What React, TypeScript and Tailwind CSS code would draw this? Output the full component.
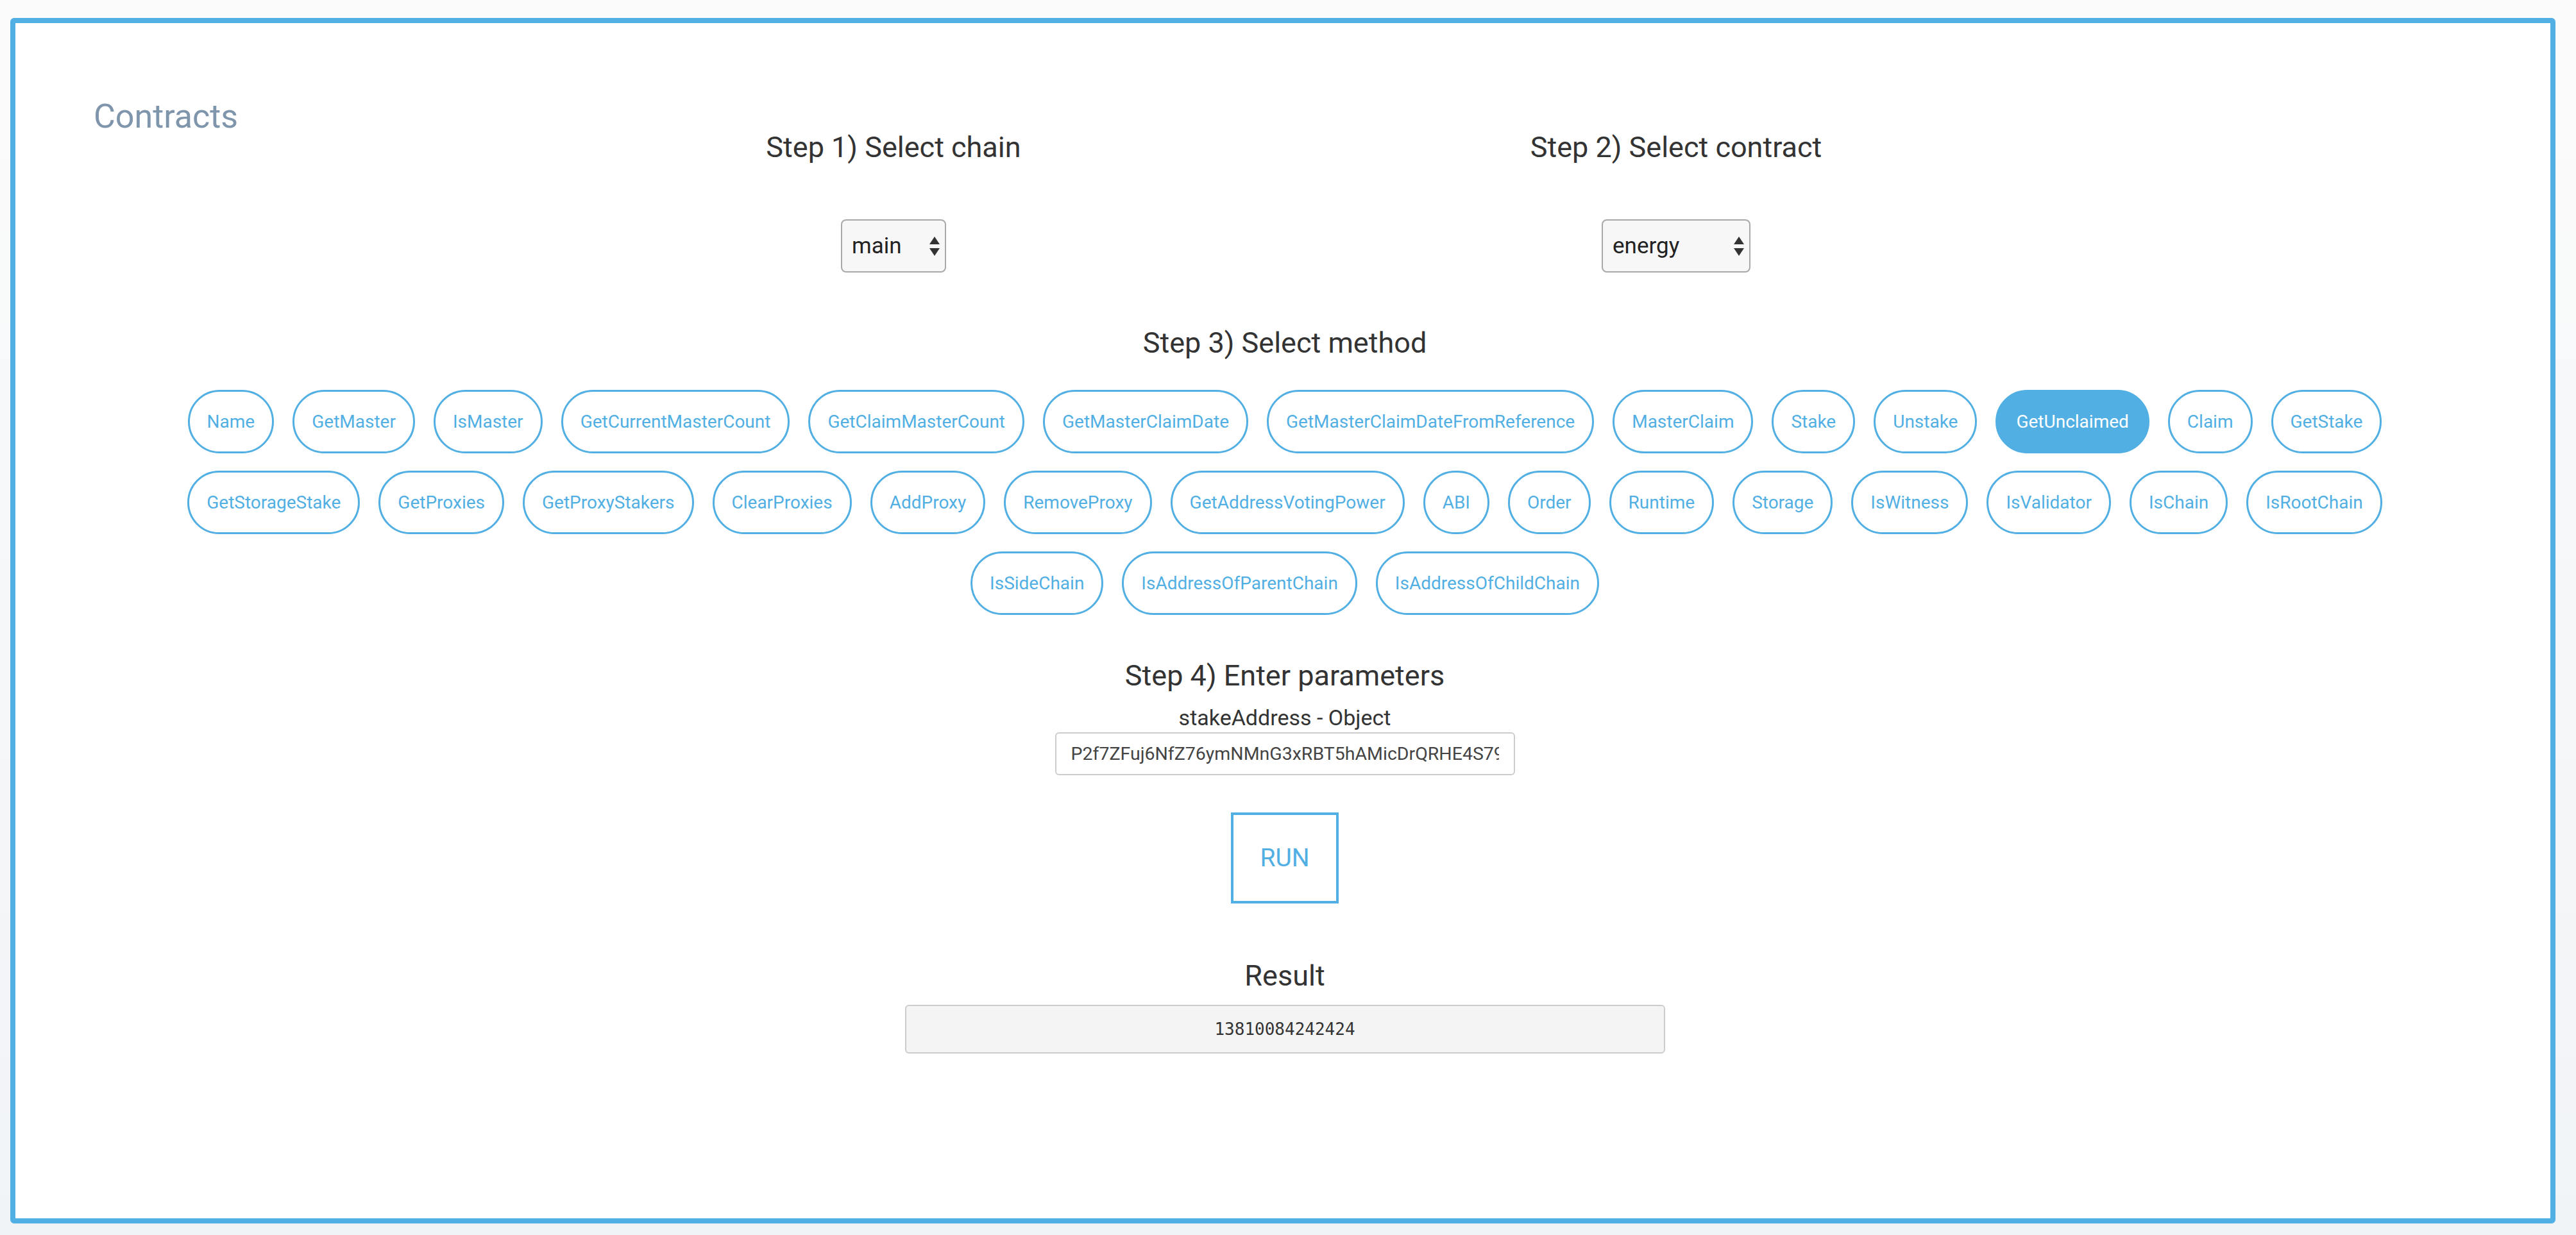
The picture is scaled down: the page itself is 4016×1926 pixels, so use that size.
import React from "react";

const rows: string[][] = [
  ["Name", "GetMaster", "IsMaster", "GetCurrentMasterCount", "GetClaimMasterCount", "GetMasterClaimDate", "GetMasterClaimDateFromReference", "MasterClaim", "Stake", "Unstake", "GetUnclaimed", "Claim", "GetStake"],
  ["GetStorageStake", "GetProxies", "GetProxyStakers", "ClearProxies", "AddProxy", "RemoveProxy", "GetAddressVotingPower", "ABI", "Order", "Runtime", "Storage", "IsWitness", "IsValidator", "IsChain", "IsRootChain"],
  ["IsSideChain", "IsAddressOfParentChain", "IsAddressOfChildChain"],
];

function Arrows() {
  return (
    <svg width="16" height="30" viewBox="0 0 16 30" className="shrink-0">
      <polygon points="8,0 16,12 0,12" fill="#333" />
      <polygon points="0,18 16,18 8,30" fill="#333" />
    </svg>
  );
}

function FakeSelect({ value, width }: { value: string; width: string }) {
  return (
    <div
      className={`${width} h-[83px] mt-[90px] flex items-center justify-between pl-[15px] pr-[8px] border-2 border-[#a9a9a9] rounded-[8px] bg-[#f7f7f7] text-[35px] leading-none text-[#222]`}
    >
      <span>{value}</span>
      <Arrows />
    </div>
  );
}

export default function App() {
  return (
    <div
      className="w-full h-[1926px] bg-gradient-to-b from-[#fbfbfb] to-[#f1f4f7] pt-[28px] pl-[16px] pr-[32px]"
      style={{ fontFamily: "Roboto, 'Noto Sans', sans-serif" }}
    >
      <div className="h-[1880px] border-[8px] border-[#51afe3] rounded-[6px] bg-white flex flex-col">
        <div className="mt-[120px] ml-[122px] text-[52px] leading-none text-[#7f95ab]">Contracts</div>

        <div className="flex justify-center pl-[6px] -mt-[1px]">
          <div className="w-[1220px] flex flex-col items-center">
            <div className="text-[45px] leading-none text-[#333]">Step 1) Select chain</div>
            <FakeSelect value="main" width="w-[164px]" />
          </div>
          <div className="w-[1220px] flex flex-col items-center">
            <div className="text-[45px] leading-none text-[#333]">Step 2) Select contract</div>
            <FakeSelect value="energy" width="w-[232px]" />
          </div>
        </div>

        <div className="flex flex-col items-center pl-[6px]">
          <div className="mt-[87px] text-[45px] leading-none text-[#333]">Step 3) Select method</div>

          <div className="mt-[51px] flex flex-col gap-[27px]">
            {rows.map((row, i) => (
              <div key={i} className="flex justify-center gap-[29px]">
                {row.map((m) => {
                  const active = m === "GetUnclaimed";
                  return (
                    <div
                      key={m}
                      className={
                        active
                          ? "h-[99px] px-[29px] flex items-center rounded-full bg-[#51afe3] border-[3px] border-[#51afe3] text-white text-[28px] leading-none"
                          : "h-[99px] px-[27px] flex items-center rounded-full border-[3px] border-[#51afe3] text-[#51afe3] text-[28px] leading-none"
                      }
                    >
                      {m}
                    </div>
                  );
                })}
              </div>
            ))}
          </div>

          <div className="mt-[72px] text-[45px] leading-none text-[#333]">Step 4) Enter parameters</div>
          <div className="mt-[26px] text-[34px] leading-none text-[#333]">stakeAddress - Object</div>
          <input
            readOnly
            value="P2f7ZFuj6NfZ76ymNMnG3xRBT5hAMicDrQRHE4S79TgJ4vXk"
            className="mt-[6px] w-[717px] h-[67px] border-2 border-[#cccccc] rounded-[6px] pl-[23px] pr-[23px] text-[28.5px] text-[#444] bg-white outline-none"
            style={{ fontFamily: "Roboto, sans-serif" }}
          />

          <div className="mt-[58px] w-[168px] h-[142px] border-4 border-[#51afe3] flex items-center justify-center text-[39px] leading-none text-[#51afe3]">
            RUN
          </div>

          <div className="mt-[90px] text-[45px] leading-none text-[#333]">Result</div>
          <div
            className="mt-[23px] w-[1185px] h-[76px] border-2 border-[#cccccc] rounded-[6px] bg-[#f4f4f4] flex items-center justify-center text-[26px] leading-none text-[#333]"
            style={{ fontFamily: "'DejaVu Sans Mono', monospace" }}
          >
            13810084242424
          </div>
        </div>
      </div>
    </div>
  );
}
